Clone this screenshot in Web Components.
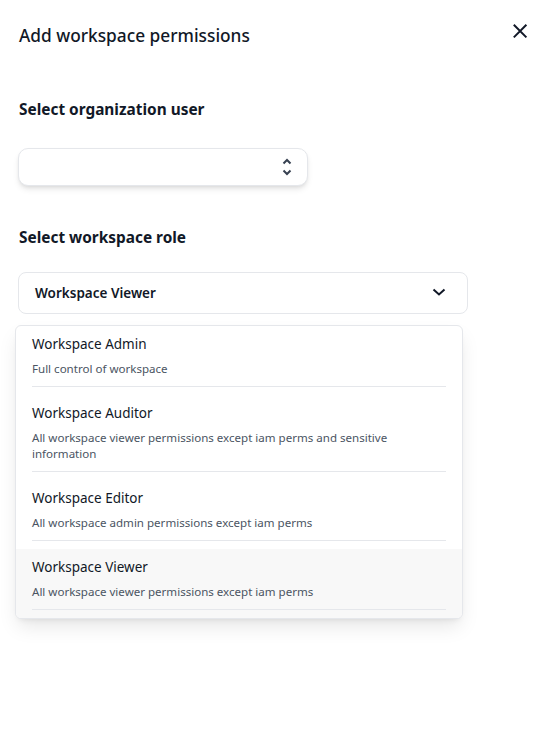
<!DOCTYPE html>
<html>
<head>
<meta charset="utf-8">
<style>
  html, body { margin: 0; height: 100%; background: #fff; }
  body { font-family: "Noto Sans", "Open Sans", sans-serif; color: #111827; }
</style>
</head>
<body>
<permissions-drawer heading="Add workspace permissions">
  <field-section label="Select organization user" class="user">
    <user-combobox></user-combobox>
  </field-section>
  <field-section label="Select workspace role" class="role">
    <role-select value="Workspace Viewer">
      <role-option name="Workspace Admin">Full control of workspace</role-option>
      <role-option name="Workspace Auditor">All workspace viewer permissions except iam perms and sensitive information</role-option>
      <role-option name="Workspace Editor">All workspace admin permissions except iam perms</role-option>
      <role-option name="Workspace Viewer" active>All workspace viewer permissions except iam perms</role-option>
    </role-select>
  </field-section>
</permissions-drawer>

<script>
// Drawer with title row and close button
class PermissionsDrawer extends HTMLElement {
    constructor() {
        super();
        this.attachShadow({ mode: 'open' });
        this.shadowRoot.innerHTML = `
            <style>
                :host { display: block; padding-left: 18px; }
                .top { display: flex; justify-content: space-between; height: 70px; }
                h2 {
                    margin: 24px 0 0 1px;
                    font-size: 17.3px;
                    line-height: 24px;
                    font-weight: 500;
                    color: #111827;
                }
                button {
                    border: 0; background: none; padding: 0;
                    margin: 21px 30px 0 0;
                    width: 20px; height: 20px;
                    color: #111827;
                }
                svg { display: block; }
            </style>
            <div class="top">
                <h2 id="title"></h2>
                <button aria-label="Close">
                    <svg width="20" height="20" viewBox="0 0 20 20" fill="none" stroke="currentColor" stroke-width="2">
                        <path d="M3.8 3.8l12.6 12.6M16.4 3.8L3.8 16.4"/>
                    </svg>
                </button>
            </div>
            <slot></slot>
        `;
    }

    connectedCallback() {
        this.shadowRoot.getElementById('title').textContent = this.getAttribute('heading');
    }
}

// Bold label above a control
class FieldSection extends HTMLElement {
    constructor() {
        super();
        this.attachShadow({ mode: 'open' });
        this.shadowRoot.innerHTML = `
            <style>
                :host { display: block; }
                :host(.user) { padding-top: 28px; margin-bottom: 40px; }
                .label {
                    margin-left: 1px;
                    font-size: 15.4px;
                    line-height: 24px;
                    font-weight: 700;
                    color: #111827;
                    margin-bottom: 22px;
                }
                :host(.user) .label { margin-bottom: 26px; }
            </style>
            <div class="label" id="label"></div>
            <slot></slot>
        `;
    }

    connectedCallback() {
        this.shadowRoot.getElementById('label').textContent = this.getAttribute('label');
    }
}

// Empty combobox with up / down carets
class UserCombobox extends HTMLElement {
    constructor() {
        super();
        this.attachShadow({ mode: 'open' });
        this.shadowRoot.innerHTML = `
            <style>
                :host {
                    display: flex;
                    align-items: center;
                    justify-content: flex-end;
                    box-sizing: border-box;
                    width: 290px;
                    height: 38px;
                    padding-right: 11px;
                    background: #fff;
                    border: 1px solid #e5e7eb;
                    border-radius: 10px;
                    box-shadow: 0 4px 6px -1px rgba(0,0,0,.1), 0 2px 4px -2px rgba(0,0,0,.1);
                }
                svg { display: block; }
            </style>
            <svg width="18" height="24" viewBox="0 0 18 24" fill="none" stroke="#374151" stroke-width="2">
                <path d="M5.5 8.5L9 5 12.5 8.5M5.5 15.5L9 19 12.5 15.5"/>
            </svg>
        `;
    }
}

// Select box with its open option list
class RoleSelect extends HTMLElement {
    constructor() {
        super();
        this.attachShadow({ mode: 'open' });
        this.shadowRoot.innerHTML = `
            <style>
                :host { display: block; width: 450px; }
                .box {
                    display: flex;
                    align-items: center;
                    justify-content: space-between;
                    box-sizing: border-box;
                    height: 42px;
                    padding: 0 20px 0 16px;
                    background: #fff;
                    border: 1px solid #e5e7eb;
                    border-radius: 8px;
                    font-size: 13.5px;
                    font-weight: 600;
                    color: #111827;
                }
                svg { display: block; }
                .list {
                    box-sizing: border-box;
                    width: 448px;
                    margin: 11px 0 0 -3px;
                    background: #fff;
                    border: 1px solid #e5e7eb;
                    border-radius: 6px;
                    overflow: hidden;
                    box-shadow: 0 10px 20px -3px rgba(0,0,0,.1), 0 4px 6px -4px rgba(0,0,0,.1);
                }
            </style>
            <div class="box">
                <span id="value"></span>
                <svg width="16" height="16" viewBox="0 0 16 16" fill="none" stroke="#111827" stroke-width="2">
                    <path d="M2.5 4.5L8 9.5 13.5 4.5"/>
                </svg>
            </div>
            <div class="list"><slot></slot></div>
        `;
    }

    connectedCallback() {
        this.shadowRoot.getElementById('value').textContent = this.getAttribute('value');
    }
}

// One row of the role list
class RoleOption extends HTMLElement {
    constructor() {
        super();
        this.attachShadow({ mode: 'open' });
        this.shadowRoot.innerHTML = `
            <style>
                :host { display: block; padding: 8px 16px; }
                :host([active]) { background: #f8f8f8; }
                .name {
                    font-size: 13.5px;
                    line-height: 20px;
                    color: #111827;
                    margin-bottom: 7px;
                }
                .desc {
                    font-size: 11.55px;
                    line-height: 16px;
                    color: #4b5563;
                    padding-bottom: 9px;
                    border-bottom: 1px solid #e5e7eb;
                }
            </style>
            <div class="name" id="name"></div>
            <div class="desc"><slot></slot></div>
        `;
    }

    connectedCallback() {
        this.shadowRoot.getElementById('name').textContent = this.getAttribute('name');
    }
}

customElements.define('permissions-drawer', PermissionsDrawer);
customElements.define('field-section', FieldSection);
customElements.define('user-combobox', UserCombobox);
customElements.define('role-select', RoleSelect);
customElements.define('role-option', RoleOption);
</script>
</body>
</html>
